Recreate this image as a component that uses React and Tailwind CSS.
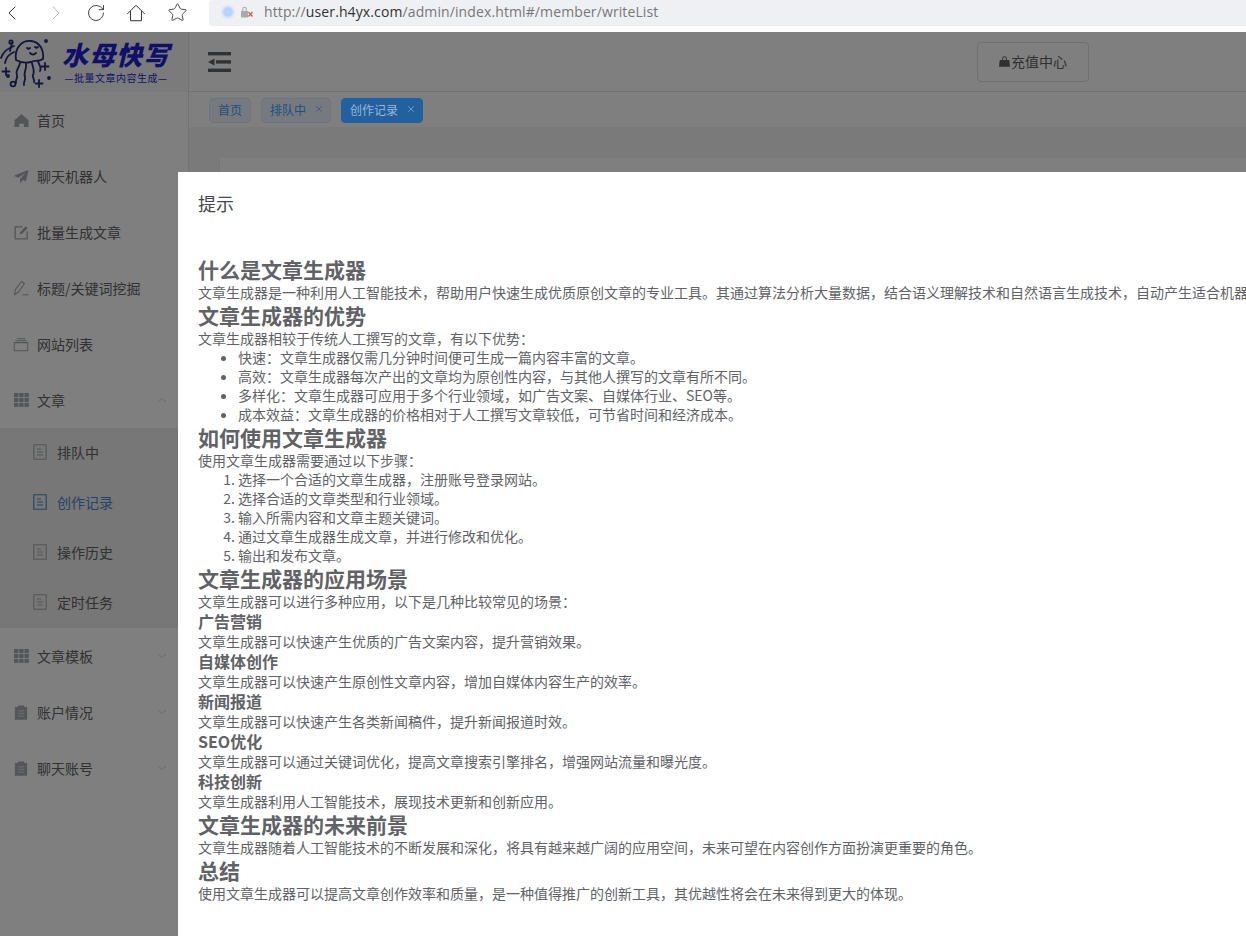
import React from 'react';
import { ChevronLeft, ChevronRight, RotateCw, Star, X, ChevronUp, ChevronDown } from 'lucide-react';

const CJK = "font-['Noto_Sans_CJK_SC','Noto_Sans',sans-serif]";
const ICON = '#a8abb0';

function HomeIcon() {
  return (
    <svg viewBox="0 0 16 16" className="w-[15px] h-[15px]" fill={ICON}>
      <path d="M8 1 15.5 7.6V15h-5v-3.6h-5V15h-5V7.6z" />
    </svg>
  );
}

function PlaneIcon() {
  return (
    <svg viewBox="0 0 16 16" className="w-[15px] h-[15px]" fill={ICON}>
      <path d="M15.6.8 0 7.2l4.4 2L12.5 4 6.4 10.4v4.8l2.9-3.4 3.3 1.4z" />
    </svg>
  );
}

function EditIcon() {
  return (
    <svg viewBox="0 0 16 16" className="w-[15px] h-[15px]" fill="none" stroke={ICON} strokeWidth="1.4">
      <path d="M9 2H1.2v12.8H14V7" />
      <path d="M6 10.2 6.6 7.4 12.6 1.4l2 2-6 6z" fill={ICON} stroke="none" />
    </svg>
  );
}

function PencilIcon() {
  return (
    <svg viewBox="0 0 16 16" className="w-[16px] h-[16px]" fill="none" stroke={ICON} strokeWidth="1.1">
      <path d="M1.5 14.5 2.5 9.5 8.5 1.5 11.5 3.5 5.5 12z" />
      <path d="M9.5 14.8h6" />
    </svg>
  );
}

function StackIcon() {
  return (
    <svg viewBox="0 0 16 16" className="w-[16px] h-[15px]" fill="none" stroke={ICON} strokeWidth="1.1">
      <path d="M.8 6h14.4v8.6H.8z" />
      <path d="M2 4h12M3.5 1.8h9" />
    </svg>
  );
}

function GridIcon() {
  return (
    <svg viewBox="0 0 15 14" className="w-[15px] h-[14px]" fill={ICON}>
      {[0, 5.2, 10.4].map((x) =>
        [0, 4.9, 9.8].map((y) => <rect key={`${x}-${y}`} x={x} y={y} width="4.4" height="4.1" />)
      )}
    </svg>
  );
}

function ClipboardIcon() {
  return (
    <svg viewBox="0 0 14 16" className="w-[14px] h-[15px]" fill={ICON}>
      <path d="M.5 2.2h3.2V.6h6.6v1.6h3.2v13.6H.5z" />
      <path d="M3.5 6.2h7M3.5 9h7M3.5 11.8h7" stroke="#e4e5e7" strokeWidth="1" />
    </svg>
  );
}

function DocIcon({ color = ICON }) {
  return (
    <svg viewBox="0 0 14 16" className="w-[14px] h-[16px]" fill="none" stroke={color} strokeWidth="1.1">
      <path d="M.8.8h12.4v14.4H.8z" />
      <path d="M4 5h4M4 8h6M4 11h6" />
    </svg>
  );
}

function LockIcon() {
  return (
    <svg viewBox="0 0 12 12" className="w-[11px] h-[11px]" fill="#606266">
      <path d="M3.4 4.4V3a2.6 2.6 0 0 1 5.2 0v1.4h-1V3a1.6 1.6 0 0 0-3.2 0v1.4z" />
      <path d="M.8 4.4h10.4L12 11.6H0z" />
    </svg>
  );
}

function Jellyfish() {
  return (
    <svg viewBox="0 0 52 60" className="relative z-10 w-[52px] h-[60px] shrink-0" fill="none" stroke="#12163f" strokeWidth="1.8" strokeLinecap="round">
      <path d="M16 28c-2-12 6-20 15-19 9 1 13 9 12 18-5 3-9 1-12 3-5 1-10 1-15-2z" />
      <path d="M27 16c1 1 2 1 3 0M35 15c1 1 2 1 3 0M30 21c2 2 4 2 6 0" />
      <path d="M20 31c-1 5-5 8-3 12 1 3-2 5-1 8M26 32c1 5-3 9-1 13 1 3-2 5-1 8M32 31c1 5 3 8 1 12-1 3 2 4 1 7M38 29c1 4 4 7 2 10" />
      <path d="M14 14C8 16 3 20 1 26M14 20C9 22 6 26 5 31M12 11l-2 8" />
      <circle cx="11" cy="10" r="1.7" />
      <circle cx="13" cy="52" r="2.4" />
      <circle cx="46" cy="9" r="1" fill="#12163f" />
      <circle cx="49" cy="46" r="1" fill="#12163f" />
      <circle cx="8" cy="44" r="1" fill="#12163f" />
      <path d="M6 36v7M2.5 39.5h7M45 31v7M41.5 34.5h7M39 48v7M35.5 51.5h7" />
    </svg>
  );
}

function MenuRow({ icon, label, chevron }) {
  return (
    <div className="h-[56px] flex items-center pl-3 pr-[19px] text-[14px] text-[#606266]">
      <span className="w-[18px] flex justify-center mr-[7px]">{icon}</span>
      <span className="flex-1">{label}</span>
      {chevron === 'up' && <ChevronUp size={14} strokeWidth={1} color="#b4b6ba" />}
      {chevron === 'down' && <ChevronDown size={14} strokeWidth={1} color="#b4b6ba" />}
    </div>
  );
}

function SubRow({ label, active }) {
  return (
    <div className={`h-[50px] flex items-center pl-[33px] pb-[2px] text-[14px] ${active ? 'text-[#4a86d0]' : 'text-[#606266]'}`}>
      <span className="mr-[10px] flex"><DocIcon color={active ? '#4a86d0' : ICON} /></span>
      {label}
    </div>
  );
}

function Sidebar() {
  return (
    <aside className="w-[189px] shrink-0 border-r border-[#e6e6e6] bg-white flex flex-col">
      <div className="h-[60px] bg-[#f6f6f6] flex items-center">
        <Jellyfish />
        <div className="relative z-10 ml-[10px] flex flex-col items-center">
          <span className="text-[26px] leading-[30px] font-black italic text-[#10106a] tracking-[1px] whitespace-nowrap">水母快写</span>
          <span className="mt-[2px] text-[10px] leading-[14px] text-[#10106a] tracking-[0.5px] whitespace-nowrap">—批量文章内容生成—</span>
        </div>
      </div>
      <div>
        <MenuRow icon={<HomeIcon />} label="首页" />
        <MenuRow icon={<PlaneIcon />} label="聊天机器人" />
        <MenuRow icon={<EditIcon />} label="批量生成文章" />
        <MenuRow icon={<PencilIcon />} label="标题/关键词挖掘" />
        <MenuRow icon={<StackIcon />} label="网站列表" />
        <MenuRow icon={<GridIcon />} label="文章" chevron="up" />
        <div className="bg-[#eeeeee]">
          <SubRow label="排队中" />
          <SubRow label="创作记录" active />
          <SubRow label="操作历史" />
          <SubRow label="定时任务" />
        </div>
        <MenuRow icon={<GridIcon />} label="文章模板" chevron="down" />
        <MenuRow icon={<ClipboardIcon />} label="账户情况" chevron="down" />
        <MenuRow icon={<ClipboardIcon />} label="聊天账号" chevron="down" />
      </div>
    </aside>
  );
}

function Tag({ label, closable, active }) {
  return (
    <span
      className={`h-[25px] flex items-center pl-[8px] rounded-[4px] border text-[12px] ${closable ? 'pr-[6px]' : 'pr-[8px]'} ${
        active ? 'relative z-10 bg-[#22609f] border-[#22609f] text-[#9db7d4]' : 'bg-[#ecf5ff] border-[#d9ecff] text-[#409eff]'
      }`}
    >
      {label}
      {closable && <X size={10} strokeWidth={1.5} className="ml-[8px] -mt-[3px]" />}
    </span>
  );
}

function Main() {
  return (
    <main className="flex-1 flex flex-col bg-white">
      <header className="h-[60px] shrink-0 border-b border-[#e6e6e6] flex items-center justify-between pl-[19px] pr-[157px]">
        <svg viewBox="0 0 23 20" className="w-[23px] h-[20px]" fill="#606266">
          <rect x="0" y="0" width="23" height="3.4" />
          <rect x="8" y="8.2" width="15" height="3.4" />
          <rect x="0" y="16.6" width="23" height="3.4" />
          <path d="M6.5 6.4v7.2L0 10z" />
        </svg>
        <div className="w-[112px] h-[40px] border border-[#dcdfe6] rounded-[4px] flex items-center justify-center gap-[1px] text-[14px] text-[#606266]">
          <LockIcon />
          充值中心
        </div>
      </header>
      <div className="h-[35px] shrink-0 flex items-center gap-[10px] pl-[20px] pt-[1px]">
        <Tag label="首页" />
        <Tag label="排队中" closable />
        <Tag label="创作记录" closable active />
      </div>
      <div className="flex-1 bg-[#f4f4f4] pt-[31px] pl-[30px]">
        <div className="h-full bg-white border-l border-[#ececec]" />
      </div>
    </main>
  );
}

function H2({ children }) {
  return <h2 className="text-[21px] leading-[27px] font-bold">{children}</h2>;
}

function H3({ children }) {
  return <h3 className="text-[16px] leading-[21px] font-bold">{children}</h3>;
}

function P({ children }) {
  return <p className="text-[14px] leading-[19px]">{children}</p>;
}

const ADVANTAGES = [
  '快速：文章生成器仅需几分钟时间便可生成一篇内容丰富的文章。',
  '高效：文章生成器每次产出的文章均为原创性内容，与其他人撰写的文章有所不同。',
  '多样化：文章生成器可应用于多个行业领域，如广告文案、自媒体行业、SEO等。',
  '成本效益：文章生成器的价格相对于人工撰写文章较低，可节省时间和经济成本。',
];

const STEPS = [
  '选择一个合适的文章生成器，注册账号登录网站。',
  '选择合适的文章类型和行业领域。',
  '输入所需内容和文章主题关键词。',
  '通过文章生成器生成文章，并进行修改和优化。',
  '输出和发布文章。',
];

const SCENES = [
  ['广告营销', '文章生成器可以快速产生优质的广告文案内容，提升营销效果。'],
  ['自媒体创作', '文章生成器可以快速产生原创性文章内容，增加自媒体内容生产的效率。'],
  ['新闻报道', '文章生成器可以快速产生各类新闻稿件，提升新闻报道时效。'],
  ['SEO优化', '文章生成器可以通过关键词优化，提高文章搜索引擎排名，增强网站流量和曝光度。'],
  ['科技创新', '文章生成器利用人工智能技术，展现技术更新和创新应用。'],
];

function Dialog() {
  return (
    <div className="absolute z-20 left-[178px] top-[172px] w-[1200px] h-[800px] bg-white text-[#606266] pl-[20px] whitespace-nowrap">
      <div className="text-[18px] leading-[24px] text-[#45474c] pt-[19px] pb-[41px] box-content">提示</div>
      <H2>什么是文章生成器</H2>
      <P>文章生成器是一种利用人工智能技术，帮助用户快速生成优质原创文章的专业工具。其通过算法分析大量数据，结合语义理解技术和自然语言生成技术，自动产生适合机器人阅读的内容。</P>
      <H2>文章生成器的优势</H2>
      <P>文章生成器相较于传统人工撰写的文章，有以下优势：</P>
      <ul className="list-disc pl-[40px]">
        {ADVANTAGES.map((item) => (
          <li key={item} className="text-[14px] leading-[19px]">{item}</li>
        ))}
      </ul>
      <H2>如何使用文章生成器</H2>
      <P>使用文章生成器需要通过以下步骤：</P>
      <ol className="list-decimal pl-[40px]">
        {STEPS.map((item) => (
          <li key={item} className="text-[14px] leading-[19px]">{item}</li>
        ))}
      </ol>
      <H2>文章生成器的应用场景</H2>
      <P>文章生成器可以进行多种应用，以下是几种比较常见的场景：</P>
      {SCENES.map(([title, text]) => (
        <div key={title}>
          <H3>{title}</H3>
          <P>{text}</P>
        </div>
      ))}
      <H2>文章生成器的未来前景</H2>
      <P>文章生成器随着人工智能技术的不断发展和深化，将具有越来越广阔的应用空间，未来可望在内容创作方面扮演更重要的角色。</P>
      <H2>总结</H2>
      <P>使用文章生成器可以提高文章创作效率和质量，是一种值得推广的创新工具，其优越性将会在未来得到更大的体现。</P>
    </div>
  );
}

export default function App() {
  return (
    <div className={`relative w-[1246px] h-[936px] overflow-hidden bg-white ${CJK}`}>
      <div className="h-[32px] flex items-start bg-white">
        <div className="w-[209px] h-[25px] flex items-center text-[#333]">
          <ChevronLeft size={24} strokeWidth={1} />
          <ChevronRight size={24} strokeWidth={1} color="#bbb" className="ml-[20px]" />
          <RotateCw size={20} strokeWidth={1.1} className="ml-[18px]" />
          <svg viewBox="0 0 22 22" className="w-[20px] h-[20px] ml-[20px]" fill="none" stroke="#333" strokeWidth="1.1">
            <path d="M1.5 12 11 2.5 20.5 12M5 9v10.5h12V9" />
          </svg>
          <Star size={21} strokeWidth={1} className="ml-[21px]" />
        </div>
        <div className="flex-1 h-[26px] bg-[#eff0f3] rounded-l-[4px] flex items-center pl-[12px] pb-[3px] text-[14px] text-[#777] tracking-[0.11px] font-['Open_Sans',sans-serif]">
          <span className="w-[14px] h-[14px] rounded-full bg-[#b9d4fb] border-[2px] border-[#dde7f7] mr-[5px]" />
          <span className="relative w-[14px] h-[12px] mr-[10px]">
            <svg viewBox="0 0 14 12" className="w-[14px] h-[12px]">
              <path d="M1 5h7v6.5H1z" fill="#aaa" />
              <path d="M2.8 5V3a1.7 1.7 0 0 1 3.4 0v2" fill="none" stroke="#aaa" strokeWidth="1.1" />
              <path d="M8.5 6l4 4.5M12.5 6l-4 4.5" stroke="#e0544a" strokeWidth="1.2" />
            </svg>
          </span>
          <span>http://</span>
          <span className="text-[#333]">user.h4yx.com</span>
          <span>/admin/index.html#/member/writeList</span>
        </div>
      </div>
      <div className="h-[904px] flex">
        <Sidebar />
        <Main />
      </div>
      <div className="absolute left-0 right-0 top-[32px] bottom-0 bg-black/50" />
      <Dialog />
    </div>
  );
}
